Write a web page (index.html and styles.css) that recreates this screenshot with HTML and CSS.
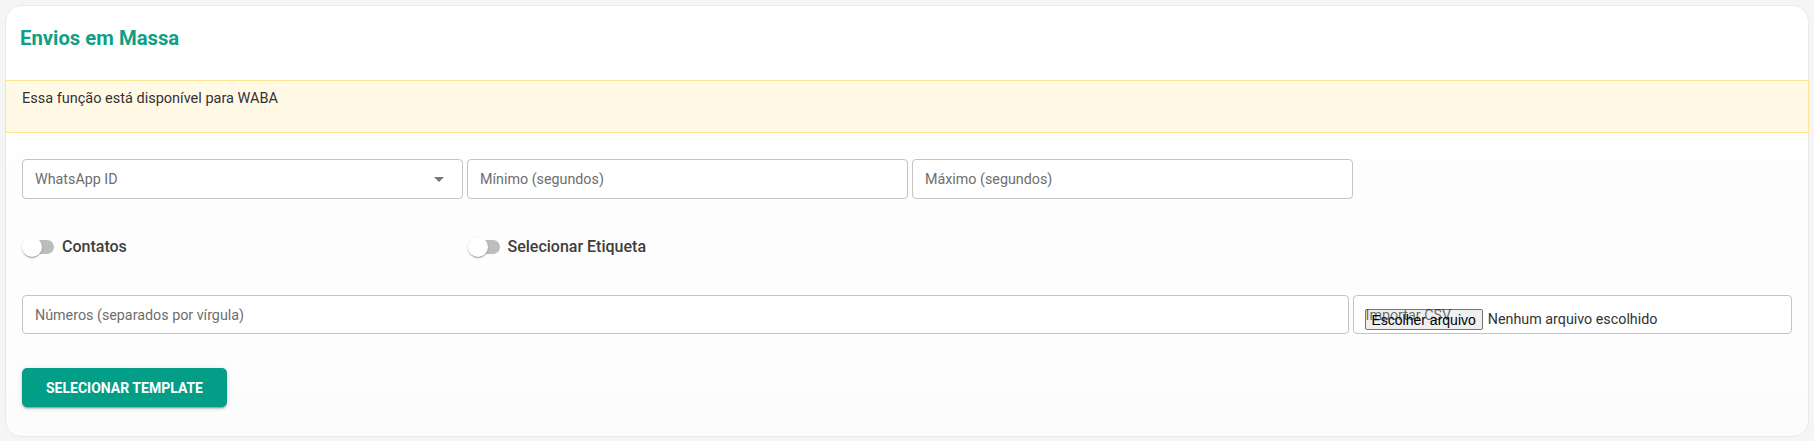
FILE: index.html
```html
<!DOCTYPE html>
<html lang="pt-BR">
<head>
<meta charset="utf-8">
<title>Envios em Massa</title>
<link rel="stylesheet" href="styles.css">
</head>
<body>
<main class="card">
  <h1 class="card-title">Envios em Massa</h1>
  <div class="notice">Essa função está disponível para WABA</div>
  <form class="form">
    <div class="grid row-inputs">
      <div class="field field-select">
        <span class="placeholder">WhatsApp ID</span>
        <svg class="caret" viewBox="0 0 24 24" width="24" height="24" aria-hidden="true"><path d="M7 10l5 5 5-5z"/></svg>
      </div>
      <div class="field"><span class="placeholder">Mínimo (segundos)</span></div>
      <div class="field"><span class="placeholder">Máximo (segundos)</span></div>
    </div>
    <div class="grid row-switches">
      <label class="switch-item"><span class="switch"><span class="thumb"></span></span><span class="switch-label">Contatos</span></label>
      <label class="switch-item"><span class="switch"><span class="thumb"></span></span><span class="switch-label">Selecionar Etiqueta</span></label>
    </div>
    <div class="grid row-numbers">
      <div class="field field-wide"><span class="placeholder">Números (separados por vírgula)</span></div>
      <div class="field field-file">
        <span class="file-btn">Escolher arquivo</span>
        <span class="file-name">Nenhum arquivo escolhido</span>
        <span class="file-label">Importar CSV</span>
      </div>
    </div>
    <button type="button" class="btn">Selecionar Template</button>
  </form>
</main>
</body>
</html>
```

FILE: styles.css
```css
* { box-sizing: border-box; }

body {
  margin: 0;
  padding: 5px;
  background: #f5f5f5;
  font-family: Roboto, "Noto Sans", "Liberation Sans", sans-serif;
  color: #333;
}

.card {
  display: block;
  background: linear-gradient(#ffffff, #fcfcfc);
  border: 1px solid #e9e9e9;
  border-radius: 16px;
}

.card-title {
  margin: 0;
  padding: 16px 14px 0;
  font-size: 20.3px;
  line-height: 32px;
  font-weight: 700;
  color: #0ea087;
}

.notice {
  margin: 26px -1px 0;
  padding: 8px 16px 23px;
  border: 1px solid #fde58e;
  background: #fff9e6;
  font-size: 14.5px;
  line-height: 20px;
  color: #333;
}

.form {
  padding: 26px 16px 29px;
}

.grid {
  display: grid;
  grid-template-columns: repeat(4, 1fr);
  column-gap: 4px;
}

.row-inputs {
  grid-template-columns: repeat(3, calc(25% - 2px));
  column-gap: 4.5px;
}

.row-switches {
  margin-top: 29px;
  column-gap: 12px;
}

.row-numbers {
  margin-top: 29px;
}

.field {
  height: 40px;
  border: 1px solid #c4c4c4;
  border-radius: 4px;
  background: #fff;
  display: flex;
  align-items: center;
  padding: 0 12px;
  font-size: 14.3px;
  line-height: 20px;
}

.placeholder {
  color: #6e6e6e;
}

.field-select {
  justify-content: space-between;
  padding-right: 11px;
}

.caret {
  fill: #767676;
  flex: none;
}

.row-numbers .field {
  height: 39px;
}

.field-wide {
  grid-column: span 3;
}

.field-file {
  position: relative;
  align-items: flex-start;
  padding: 13px 11px 0;
}

.file-btn {
  display: inline-flex;
  align-items: center;
  height: 21px;
  padding: 0 6px;
  border: 1px solid #767676;
  border-radius: 2px;
  background: #efefef;
  color: #000;
  font-family: "Liberation Sans", Arial, sans-serif;
  font-size: 14px;
  white-space: nowrap;
}

.file-name {
  margin-left: 5px;
  line-height: 21px;
  font-size: 14.3px;
  color: #333;
  white-space: nowrap;
}

.file-label {
  position: absolute;
  left: 12px;
  top: 9px;
  z-index: 1;
  font-size: 14.3px;
  line-height: 20px;
  color: rgba(0, 0, 0, 0.58);
  pointer-events: none;
  white-space: nowrap;
}

.switch-item {
  display: flex;
  align-items: center;
  gap: 8px;
  height: 38px;
}

.switch {
  display: flex;
  align-items: center;
  width: 30px;
  height: 14px;
  margin-left: 2px;
  border-radius: 7px;
  background: #bdbdbd;
  flex: none;
}

.thumb {
  width: 20px;
  height: 20px;
  flex: none;
  margin-left: -2px;
  border-radius: 50%;
  background: #fff;
  box-shadow: 0 2px 1px -1px rgba(0, 0, 0, 0.2), 0 1px 1px 0 rgba(0, 0, 0, 0.14), 0 1px 3px 0 rgba(0, 0, 0, 0.12);
}

.switch-label {
  font-size: 16px;
  line-height: 24px;
  font-weight: 500;
  color: #3d3d3d;
}

.btn {
  display: inline-flex;
  align-items: center;
  justify-content: center;
  margin-top: 34px;
  height: 39px;
  padding: 0 24px;
  border: none;
  border-radius: 5px;
  background: #039e87;
  color: #fff;
  font-family: Roboto, "Noto Sans", sans-serif;
  font-size: 14px;
  font-weight: 700;
  text-transform: uppercase;
  box-shadow: 0 3px 1px -2px rgba(0, 0, 0, 0.2), 0 2px 2px 0 rgba(0, 0, 0, 0.14), 0 1px 5px 0 rgba(0, 0, 0, 0.12);
}
```
